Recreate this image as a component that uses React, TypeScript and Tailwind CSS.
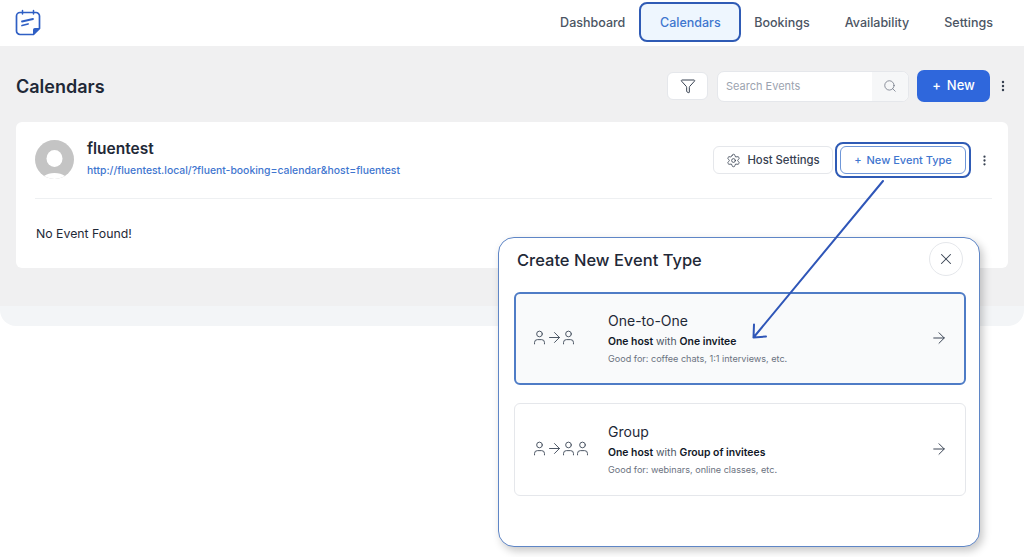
import React from "react";
import { Search, Settings, X, ArrowRight, Filter, User, EllipsisVertical } from "lucide-react";

function Logo() {
  return (
    <svg width="26" height="27" viewBox="0 0 26 27" fill="none" className="block">
      <path d="M5 3.5h16a3.5 3.5 0 0 1 3.5 3.5v12.5l-6 6H5A3.5 3.5 0 0 1 1.500 22V7A3.500 3.500 0 0 1 5 3.500Z" stroke="#2f5fc4" strokeWidth="1.700" strokeLinejoin="round" />
      <path d="M7.500 1.500v3.500M18.500 1.500v3.500" stroke="#2f5fc4" strokeWidth="1.500" strokeLinecap="round" />
      <path d="M24.500 19.500h-5a1 1 0 0 0-1 1v5Z" fill="#2f5fc4" stroke="#2f5fc4" strokeLinejoin="round" />
      <path d="M7 12.500l11-2.500M7 16.500l6-1.500" stroke="#2f5fc4" strokeWidth="1.800" strokeLinecap="round" />
    </svg>
  );
}

function Avatar() {
  return (
    <svg width="39" height="39" viewBox="0 0 39 39" className="block shrink-0">
      <defs>
        <clipPath id="av"><circle cx="19.500" cy="19.500" r="19.500" /></clipPath>
      </defs>
      <g clipPath="url(#av)">
        <rect width="39" height="39" fill="#c4c4c4" />
        <ellipse cx="19.500" cy="18.500" rx="8" ry="8.500" fill="#ffffff" />
        <ellipse cx="19.500" cy="43" rx="15" ry="10" fill="#ffffff" />
      </g>
    </svg>
  );
}

function Person({ className }: { className?: string }) {
  return <User size={17} strokeWidth={1.400} color="#4b5563" className={"shrink-0 " + (className ?? "")} />;
}

function Option({
  active,
  title,
  second,
  desc,
  people,
  className,
}: {
  active?: boolean;
  title: string;
  second: string;
  desc: string;
  people: number;
  className?: string;
}) {
  return (
    <div
      className={
        "flex h-[93px] items-center rounded-[6px] " +
        (active
          ? "border-2 border-[#4f7cc6] bg-[#f9fafb] pl-[15px] pr-[16px] "
          : "border border-[#e5e7eb] bg-white pl-[16px] pr-[17px] ") +
        (className ?? "")
      }
    >
      <div className="-mt-[2px] flex w-[77px] shrink-0 items-center">
        <Person />
        <ArrowRight size={17} strokeWidth={1.400} color="#4b5563" className="-mx-[2.500px] shrink-0" />
        <Person />
        {people > 1 && <Person className="-ml-[3px]" />}
      </div>
      <div className="min-w-0 flex-1">
        <div className="-mt-[2px] text-[14px] leading-[20px] text-[#1f2937]">{title}</div>
        <div className="mt-[4px] text-[10.400px] leading-[14px] text-[#4b5563]">
          <span className="font-semibold text-[#111827]">One host</span> with{" "}
          <span className="font-semibold text-[#111827]">{second}</span>
        </div>
        <div className="mt-[3px] text-[9.100px] leading-[13px] text-[#6b7280]">{desc}</div>
      </div>
      <ArrowRight size={18} strokeWidth={1.300} color="#374151" className="-mt-[2px] shrink-0" />
    </div>
  );
}

export default function App() {
  return (
    <div className="relative h-[557px] w-[1024px] overflow-hidden bg-white font-['Inter',sans-serif]">
      <nav className="flex h-[46px] items-start justify-between bg-white pl-[15px] pr-[31px]">
        <div className="mt-[9px]">
          <Logo />
        </div>
        <div className="flex items-center pt-[2px] text-[12.500px] font-medium text-[#4b5563]">
          <span className="mr-[14px] pt-[2px]">Dashboard</span>
          <span className="flex h-[40px] w-[102px] items-center justify-center rounded-[8px] border-2 border-[#2f5bb5] bg-[#eef6fe] pt-[2px] text-[#3f76cf]">
            Calendars
          </span>
          <span className="ml-[13px] pt-[2px]">Bookings</span>
          <span className="ml-[35px] pt-[2px]">Availability</span>
          <span className="ml-[35px] pt-[2px]">Settings</span>
        </div>
      </nav>

      <div className="rounded-b-[16px] bg-[#f3f5f7] pb-[20px]">
        <main className="h-[260px] bg-[#f0f0f1] px-[16px] pt-[24px]">
          <div className="flex h-[32px] items-center">
            <h1 className="text-[18px] font-semibold text-[#1f2937]">Calendars</h1>
            <div className="ml-auto flex items-center">
              <button className="flex h-[28px] w-[41px] items-center justify-center rounded-[6px] border border-[#e5e7eb] bg-white">
                <Filter size={16} strokeWidth={1.500} color="#374151" />
              </button>
              <div className="ml-[9px] flex h-[31px] w-[192px] items-center overflow-hidden rounded-[7px] border border-[#e5e7eb] bg-white">
                <span className="flex-1 pl-[8px] text-[11px] text-[#9ca3af]">Search Events</span>
                <span className="flex h-full w-[36px] items-center justify-center bg-[#f6f7f8]">
                  <Search size={14} strokeWidth={1.300} color="#6b7280" />
                </span>
              </div>
              <button className="ml-[8px] flex h-[32px] w-[73px] items-center justify-center gap-[6px] rounded-[7px] bg-[#2f67dc] text-[13px] font-medium text-white">
                <span>+</span>
                <span>New</span>
              </button>
              <EllipsisVertical size={14} strokeWidth={2.200} color="#374151" className="-mr-[2px] ml-[6px]" />
            </div>
          </div>

          <section className="mt-[20px] h-[146px] w-[992px] rounded-[6px] bg-white px-[16px] pl-[19px] pt-[18px]">
            <div className="flex h-[59px] items-start border-b border-[#eef0f2]">
              <Avatar />
              <div className="ml-[13px] min-w-0">
                <div className="text-[15.500px] font-semibold leading-[18px] text-[#1f2937]">fluentest</div>
                <div className="mt-[6px] text-[10.400px] font-medium leading-[14px] text-[#3f76cf]">
                  http://fluentest.local/?fluent-booking=calendar&amp;host=fluentest
                </div>
              </div>
              <div className="ml-auto mt-[6px] flex items-center">
                <button className="flex h-[28px] w-[120px] items-center justify-center gap-[6px] rounded-[6px] border border-[#e5e7eb] bg-white text-[11.300px] font-medium text-[#374151]">
                  <Settings size={15} strokeWidth={1.300} color="#374151" />
                  Host Settings
                </button>
                <button className="relative ml-[7px] flex h-[28px] w-[126px] items-center justify-center gap-[5px] rounded-[6px] border border-[#6f97d8] bg-white text-[11px] font-medium text-[#3f76cf]">
                  <span className="pointer-events-none absolute -inset-x-[6px] -inset-y-[5px] rounded-[8px] border-2 border-[#2f5bb5]" />
                  <span>+</span>
                  <span>New Event Type</span>
                </button>
                <EllipsisVertical size={13} strokeWidth={2.200} color="#374151" className="ml-[12px] mr-[1px]" />
              </div>
            </div>
            <p className="mt-[26px] pl-[1px] text-[12.300px] leading-[18px] text-[#1f2937]">No Event Found!</p>
          </section>
        </main>
      </div>

      <div className="absolute left-[498px] top-[237px] h-[310px] w-[482px] rounded-[16px] border border-[#5f86c6] bg-white pl-[15px] pr-[13px] shadow-[3px_4px_8px_rgba(0,0,0,0.22)]">
        <div className="flex h-[44px] items-start justify-between">
          <h2 className="ml-[3px] mt-[9px] text-[16.500px] font-medium leading-[26px] text-[#1f2937]">Create New Event Type</h2>
          <span className="mr-[3px] mt-[4px] flex h-[34px] w-[34px] items-center justify-center rounded-full border border-[#e5e7eb]">
            <X size={18} strokeWidth={1.400} color="#374151" />
          </span>
        </div>
        <Option className="mt-[10px]" active title="One-to-One" second="One invitee" desc="Good for: coffee chats, 1:1 interviews, etc." people={1} />
        <Option className="mt-[18px]" title="Group" second="Group of invitees" desc="Good for: webinars, online classes, etc." people={2} />
      </div>

      <svg width="1024" height="557" className="pointer-events-none absolute left-0 top-0" fill="none">
        <path d="M883 181 753.500 337.500M753.500 337.500l.5-13M753.500 337.500l12.500-1" stroke="#2f56b8" strokeWidth="2" strokeLinecap="round" />
      </svg>
    </div>
  );
}
